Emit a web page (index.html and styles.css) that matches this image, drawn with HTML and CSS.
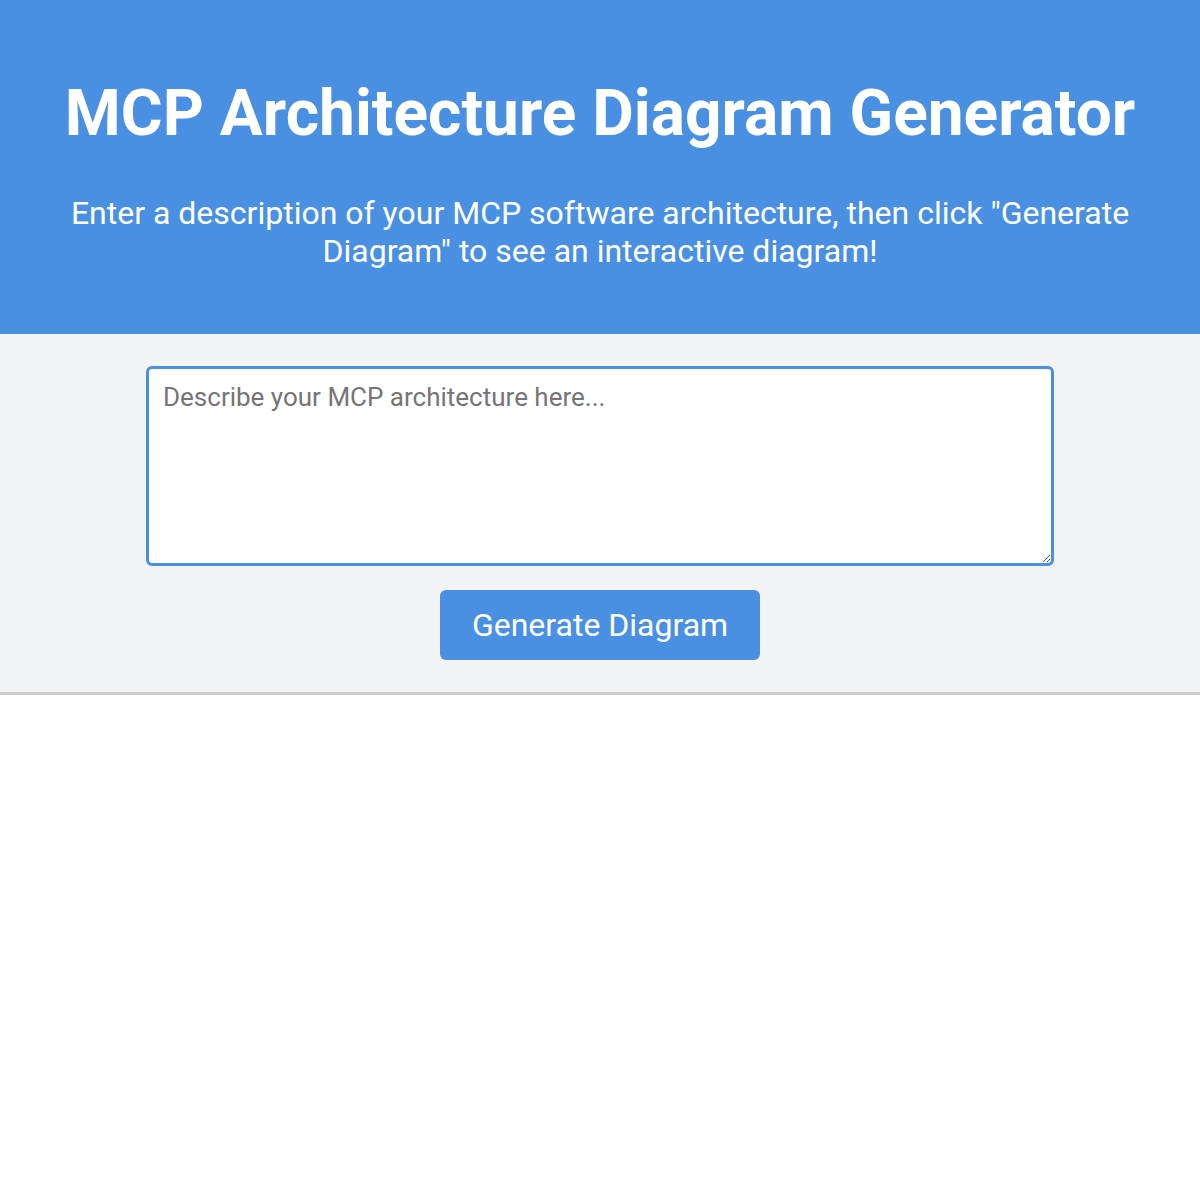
FILE: index.html
```html
<!DOCTYPE html>
<html lang="en">
<head>
<meta charset="utf-8">
<title>MCP Architecture Diagram Generator</title>
<link rel="stylesheet" href="styles.css">
</head>
<body>
<header class="hero">
  <h1 class="hero-title">MCP Architecture Diagram Generator</h1>
  <p class="hero-sub">Enter a description of your MCP software architecture, then click "Generate Diagram" to see an interactive diagram!</p>
</header>
<section class="controls">
  <textarea class="desc-input" placeholder="Describe your MCP architecture here..."></textarea>
  <button class="gen-btn" type="button">Generate Diagram</button>
</section>
<main class="diagram"></main>
</body>
</html>
```

FILE: styles.css
```css
* { box-sizing: border-box; }
html, body { margin: 0; padding: 0; background: #ffffff; }
body { font-family: Roboto, "Noto Sans", "Liberation Sans", sans-serif; }

.hero {
  background: #4a90e2;
  color: #ffffff;
  height: 334px;
  padding: 76px 40px 0;
  text-align: center;
}
.hero-title {
  margin: 0;
  font-size: 64px;
  font-weight: 700;
  line-height: 75px;
}
.hero-sub {
  margin: 43px 0 0;
  font-size: 32px;
  line-height: 38.4px;
  font-weight: 400;
}

.controls {
  background: #f2f3f5;
  border-bottom: 3px solid #cccccc;
  padding: 32px 0;
  display: flex;
  flex-direction: column;
  align-items: center;
  gap: 24px;
}
.desc-input {
  display: block;
  width: 908px;
  height: 200px;
  border: 3px solid #4a90e2;
  border-radius: 6px;
  padding: 13px 14px;
  font-family: Roboto, "Noto Sans", "Liberation Sans", sans-serif;
  font-size: 26px;
  background: #ffffff;
  outline: none;
  resize: both;
}
.desc-input::placeholder { color: #757575; }
.gen-btn {
  width: 320px;
  height: 70px;
  border: none;
  border-radius: 6px;
  background: #4a90e2;
  color: #ffffff;
  font-family: Roboto, "Noto Sans", "Liberation Sans", sans-serif;
  font-size: 32px;
  cursor: pointer;
}
.diagram { min-height: 400px; }
```
